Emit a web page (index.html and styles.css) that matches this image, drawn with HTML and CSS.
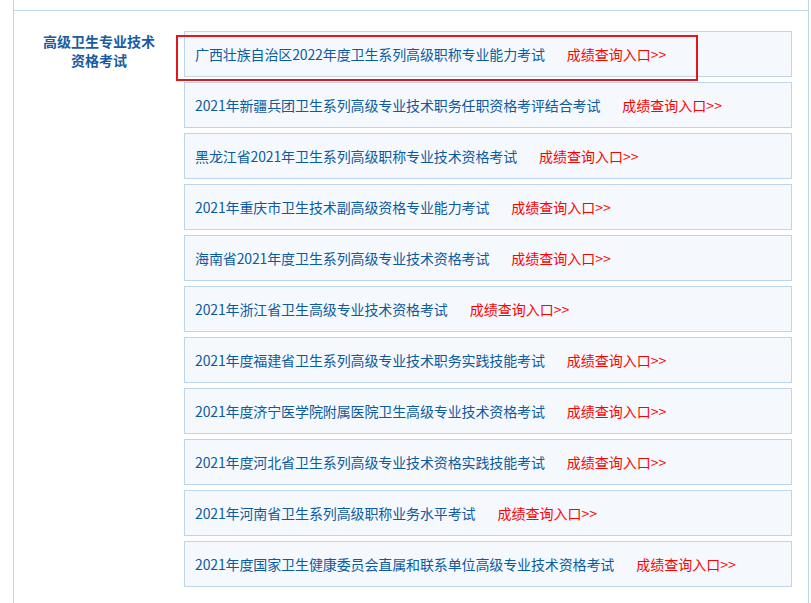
FILE: index.html
```html
<!DOCTYPE html>
<html lang="zh-CN">
<head>
<meta charset="utf-8">
<title>成绩查询</title>
<link rel="stylesheet" href="styles.css">
</head>
<body>
<div class="table">
  <div class="prev"></div>
  <div class="row">
    <div class="side">
      <h3 class="side-title">高级卫生专业技术<br>资格考试</h3>
    </div>
    <ul class="list">
      <li class="item highlighted"><span class="name">广西壮族自治区2022年度卫生系列高级职称专业能力考试</span><a class="link" href="#">成绩查询入口&gt;&gt;</a><span class="mark"></span></li>
      <li class="item"><span class="name">2021年新疆兵团卫生系列高级专业技术职务任职资格考评结合考试</span><a class="link" href="#">成绩查询入口&gt;&gt;</a></li>
      <li class="item"><span class="name">黑龙江省2021年卫生系列高级职称专业技术资格考试</span><a class="link" href="#">成绩查询入口&gt;&gt;</a></li>
      <li class="item"><span class="name">2021年重庆市卫生技术副高级资格专业能力考试</span><a class="link" href="#">成绩查询入口&gt;&gt;</a></li>
      <li class="item"><span class="name">海南省2021年度卫生系列高级专业技术资格考试</span><a class="link" href="#">成绩查询入口&gt;&gt;</a></li>
      <li class="item"><span class="name">2021年浙江省卫生高级专业技术资格考试</span><a class="link" href="#">成绩查询入口&gt;&gt;</a></li>
      <li class="item"><span class="name">2021年度福建省卫生系列高级专业技术职务实践技能考试</span><a class="link" href="#">成绩查询入口&gt;&gt;</a></li>
      <li class="item"><span class="name">2021年度济宁医学院附属医院卫生高级专业技术资格考试</span><a class="link" href="#">成绩查询入口&gt;&gt;</a></li>
      <li class="item"><span class="name">2021年度河北省卫生系列高级专业技术资格实践技能考试</span><a class="link" href="#">成绩查询入口&gt;&gt;</a></li>
      <li class="item"><span class="name">2021年河南省卫生系列高级职称业务水平考试</span><a class="link" href="#">成绩查询入口&gt;&gt;</a></li>
      <li class="item"><span class="name">2021年度国家卫生健康委员会直属和联系单位高级专业技术资格考试</span><a class="link" href="#">成绩查询入口&gt;&gt;</a></li>
    </ul>
  </div>
</div>
</body>
</html>
```
FILE: styles.css
```css
html, body {
  margin: 0;
  padding: 0;
  background: #ffffff;
}
body {
  font-family: "Noto Sans CJK SC", "Liberation Sans", sans-serif;
  font-size: 14px;
  overflow: hidden;
}
.table {
  margin-left: 13px;
  width: 796px;
  box-sizing: border-box;
  border-left: 1px solid #bdd5ea;
  border-right: 1px solid #bdd5ea;
}
.prev {
  height: 10px;
}
.row {
  display: flex;
  border-top: 1px solid #bdd5ea;
}
.side {
  width: 170px;
  flex: none;
  padding-top: 21px;
}
.side-title {
  margin: 0;
  text-align: center;
  font-size: 14px;
  font-weight: bold;
  line-height: 19px;
  color: #1b5b9f;
}
.list {
  list-style: none;
  margin: 0;
  padding: 20px 0 30px 0;
  width: 608px;
  display: flex;
  flex-direction: column;
  gap: 5px;
}
.item {
  position: relative;
  box-sizing: border-box;
  height: 46px;
  display: flex;
  align-items: center;
  padding-left: 10px;
  border: 1px solid #bdd5ea;
  background: #f5f9fd;
  white-space: nowrap;
}
.name {
  color: #0c5aa0;
  letter-spacing: -0.12px;
}
.link {
  margin-left: 22px;
  color: #ff0000;
  text-decoration: none;
}
.mark {
  position: absolute;
  left: -9px;
  top: 3px;
  width: 522px;
  height: 46px;
  box-sizing: border-box;
  border: 2px solid #e8141c;
  pointer-events: none;
}
```
